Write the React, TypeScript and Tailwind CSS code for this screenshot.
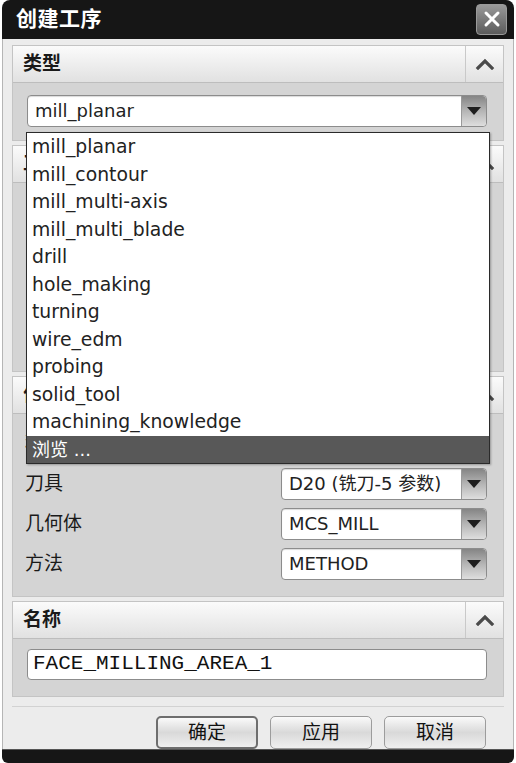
import React from 'react';

const FONT = { fontFamily: '"DejaVu Sans", "Noto Sans CJK SC", sans-serif' };

// Icons
const ChevronUp = () => (
  <svg width="20" height="12" viewBox="0 0 20 12" fill="none" stroke="#4a4a4a" strokeWidth="3.2" strokeLinecap="square"><path d="M3 10 L10 3 L17 10" /></svg>
);

const CloseIcon = () => (
  <svg width="18" height="18" viewBox="0 0 18 18" fill="none" stroke="#fff" strokeWidth="3" strokeLinecap="round"><path d="M3 3 L15 15 M15 3 L3 15" /></svg>
);

const DropArrow = () => (
  <span className="flex w-[25px] h-full items-center justify-center border-l border-[#9a9a9a] bg-gradient-to-b from-[#858585] via-[#b5b5b5] to-[#dedede] rounded-r-[4px]">
    <svg width="14" height="8" viewBox="0 0 14 8"><path d="M0 0 H14 L7 8 Z" fill="#1e1e1e" /></svg>
  </span>
);

const Section = ({ label, bodyClass, children }: { label: string; bodyClass: string; children?: React.ReactNode }) => (
  <div className="flex flex-col border border-[#c4c4c4] mb-[4px] last:mb-0">
    <div className="flex h-[37px] bg-gradient-to-b from-[#fbfbfb] to-[#e1e1e1] border-b border-[#bdbdbd]">
      <div className="flex-1 flex items-center pl-[10px] text-[19px] font-bold text-[#1a1a1a]">{label}</div>
      <div className="w-[38px] flex items-center justify-center border-l border-[#c9c9c9]">
        <ChevronUp />
      </div>
    </div>
    <div className={`bg-[#d4d4d4] ${bodyClass}`}>{children}</div>
  </div>
);

const Select = ({ value, className }: { value: string; className: string }) => (
  <div className={`flex h-[32px] bg-white border border-[#8c8c8c] rounded-[4px] shadow-[inset_0_1px_1px_rgba(0,0,0,0.15)] ${className}`}>
    <div className="flex-1 flex items-center pl-[7px] text-[18px] text-[#222] whitespace-nowrap overflow-hidden">{value}</div>
    <DropArrow />
  </div>
);

const Row = ({ label, value }: { label: string; value: string }) => (
  <div className="flex items-center h-[32px]">
    <div className="flex-1 pl-[12px] text-[19px] text-[#1a1a1a]">{label}</div>
    <Select value={value} className="w-[206px] mr-[16px]" />
  </div>
);

const items = [
  'mill_planar',
  'mill_contour',
  'mill_multi-axis',
  'mill_multi_blade',
  'drill',
  'hole_making',
  'turning',
  'wire_edm',
  'probing',
  'solid_tool',
  'machining_knowledge',
];

const App: React.FC = () => {
  return (
    <div className="relative w-[516px] h-[763px] bg-white overflow-hidden" style={FONT}>
      <div className="flex flex-col h-full mx-[2px] rounded-t-[8px] rounded-b-[6px] overflow-hidden">
        {/* Title bar */}
        <div className="flex items-center justify-between h-[40px] bg-[#161616] pl-[14px] pr-[7px]">
          <span className="text-white text-[21px] font-bold tracking-[0.5px]">创建工序</span>
          <button className="flex items-center justify-center w-[31px] h-[31px] rounded-[4px] border border-[#9a9a9a] bg-gradient-to-b from-[#9a9a9a] to-[#5c5c5c]">
            <CloseIcon />
          </button>
        </div>

        {/* Body */}
        <div className="flex-1 flex flex-col bg-[#ececec] border-x border-[#b5b5b5] pl-[9px] pr-[9px] pt-[6px]">
          <Section label="类型" bodyClass="h-[57px] pt-[12px] pl-[14px] pr-[16px]">
            <Select value="mill_planar" className="w-full" />
          </Section>
          <Section label="工序子类型" bodyClass="h-[188px]" />
          <Section label="位置" bodyClass="h-[182px] pt-[14px] flex flex-col gap-[8px]">
            <Row label="程序" value="NC_PROGRAM" />
            <Row label="刀具" value="D20 (铣刀-5 参数)" />
            <Row label="几何体" value="MCS_MILL" />
            <Row label="方法" value="METHOD" />
          </Section>
          <Section label="名称" bodyClass="h-[57px] pt-[10px] pl-[14px] pr-[16px]">
            <div className="flex items-center h-[31px] bg-white border border-[#8c8c8c] rounded-[4px] pl-[5px] text-[21px] text-[#111]" style={{ fontFamily: '"Liberation Mono", monospace' }}>
              FACE_MILLING_AREA_1
            </div>
          </Section>

          {/* Footer */}
          <div className="mt-[5px] border-t border-[#d2d2d2] shadow-[0_1px_0_#fff] flex justify-end gap-[12px] pt-[9px] pr-[18px]">
            {['确定', '应用', '取消'].map((b, i) => (
              <button
                key={b}
                className={`w-[102px] h-[33px] rounded-[5px] text-[19px] text-[#111] bg-gradient-to-b from-[#fafafa] via-[#d9d9d9] to-[#efefef] border ${i === 0 ? 'border-[#6e6e6e] border-2' : 'border-[#9c9c9c]'}`}
              >
                {b}
              </button>
            ))}
          </div>
        </div>

        {/* Bottom bar */}
        <div className="h-[15px] bg-[#161616] border-t border-[#555]" />
      </div>

      {/* Open dropdown list */}
      <div className="absolute left-[26px] top-[132px] w-[464px] bg-white border border-[#2a2a2a] shadow-[1px_1px_2px_rgba(0,0,0,0.3)]">
        {items.map((it) => (
          <div key={it} className="h-[27.5px] leading-[27.5px] pl-[5px] text-[18.8px] text-[#222]">{it}</div>
        ))}
        <div className="h-[27.5px] leading-[27.5px] pl-[5px] text-[18px] text-white bg-[#585858]">浏览 ...</div>
      </div>
    </div>
  );
};

export default App;
